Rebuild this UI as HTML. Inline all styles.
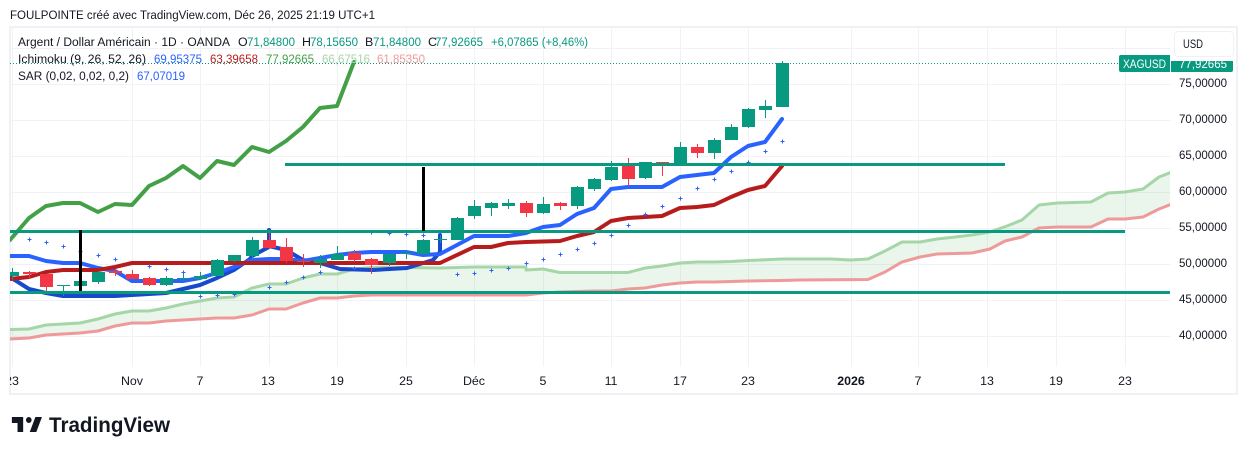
<!DOCTYPE html>
<html><head><meta charset="utf-8"><style>
html,body{margin:0;padding:0;background:#fff;width:1248px;height:455px;overflow:hidden}
svg{display:block;font-family:"Liberation Sans",sans-serif;font-size:12.4px;fill:#131722}
</style></head><body>
<svg width="1248" height="455" viewBox="0 0 1248 455" xmlns="http://www.w3.org/2000/svg">
<defs><clipPath id="c"><rect x="10" y="27" width="1160" height="339"/></clipPath>
<clipPath id="t"><rect x="10" y="366" width="1227" height="28"/></clipPath>
<clipPath id="p"><rect x="1171" y="61" width="62" height="11"/></clipPath></defs>
<rect x="10" y="27" width="1227" height="367" fill="#fff" stroke="#f0f1f4" stroke-width="2"/>
<path d="M12 27V366M132 27V366M200 27V366M269 27V366M337 27V366M406 27V366M474 27V366M543 27V366M611 27V366M680 27V366M748 27V366M851 27V366M918 27V366M987 27V366M1056 27V366M1125 27V366M10 48H1170M10 84H1170M10 120H1170M10 156H1170M10 192H1170M10 228H1170M10 264H1170M10 300H1170M10 336H1170" stroke="#f1f2f5" fill="none" transform="translate(.5 .5)"/>
<g clip-path="url(#c)" fill="none" stroke-linejoin="round" stroke-linecap="round">
<polygon stroke="none" fill="#43a047" fill-opacity=".11" points="10,329.5 29,329 46,325 63,324 80,323 98,319 115,314 132,311 149,311 166,308 183,304 200,301 217,298 234,297 252,288 269,284 286,284 303,278 320,274 337,274 354,269 371,267.5 389,267 406,267.5 440,268 474,267 526,267 526,270 543,269 560,272.5 628,272.5 645,268 662,266 680,263 697,262 714,262 731,261.5 748,260.5 782,259 832,259 850,260 868,259 885,251 902,242 920,242 937,239 955,237 972,235 990,232 1007,226 1022,220 1039,205 1057,203 1091,202 1108,193 1125,192 1143,189 1159,177 1172,172 1172,204 1159,209 1143,217 1125,219 1108,219 1091,227 1057,227 1039,228 1022,237 1005,241 990,249 972,253 937,254 920,257 902,262 885,272 868,279.5 800,280 782,280.5 748,281 714,282 697,282 680,283 662,285 645,288 628,289 611,291 594,291 560,292 543,293 526,295 371,295 354,296 337,298 320,298 303,303 286,309 269,309 252,315 234,318 217,318 200,319 183,320 166,321 149,323 132,323 115,326 98,331 80,333 63,334 46,335 29,338 10,339"/>
<polyline stroke="#a5d6a7" stroke-width="3" points="10,329.5 29,329 46,325 63,324 80,323 98,319 115,314 132,311 149,311 166,308 183,304 200,301 217,298 234,297 252,288 269,284 286,284 303,278 320,274 337,274 354,269 371,267.5 389,267 406,267.5 440,268 474,267 526,267 526,270 543,269 560,272.5 628,272.5 645,268 662,266 680,263 697,262 714,262 731,261.5 748,260.5 782,259 832,259 850,260 868,259 885,251 902,242 920,242 937,239 955,237 972,235 990,232 1007,226 1022,220 1039,205 1057,203 1091,202 1108,193 1125,192 1143,189 1159,177 1172,172"/>
<polyline stroke="#ef9a9a" stroke-width="3" points="10,339 29,338 46,335 63,334 80,333 98,331 115,326 132,323 149,323 166,321 183,320 200,319 217,318 234,318 252,315 269,309 286,309 303,303 320,298 337,298 354,296 371,295 526,295 543,293 560,292 594,291 611,291 628,289 645,288 662,285 680,283 697,282 714,282 748,281 782,280.5 800,280 868,279.5 885,272 902,262 920,257 937,254 972,253 990,249 1005,241 1022,237 1039,228 1057,227 1091,227 1108,219 1125,219 1143,217 1159,209 1172,204"/>
<polyline stroke="#43a047" stroke-width="4" points="10,240 29,218 46,206 63,203 80,203 98,212 115,204 132,205 149,186 166,178 183,166 200,178 217,161 234,165 252,147 269,152 286,141 303,127 320,108 337,106 354,62"/>
<polyline stroke="#1848cc" stroke-width="4" points="10,277 29,289 46,293 63,296 80,296 115,296 132,295 166,293 200,285 217,278 234,270 250,259 252,256 269,247 269,230 269,246 286,250 303,260 320,263 340,269 373,270 407,268 433,260 440,252 440,235"/>
<polyline stroke="#2962ff" stroke-width="4" points="10,256 29,256 46,261 63,263 80,263 98,268 115,271 132,281 149,281 166,281 183,281 200,278 217,273 234,267 252,260 269,259 286,259 303,261 320,258 337,255 354,253 371,252 406,252 423,255 440,254 457,245 474,236 508,236 526,233 543,227 560,225 577,214 594,208 611,189 628,187 662,187 680,177 697,175 714,173 731,157 748,146 765,142 782,119"/>
<polyline stroke="#b71c1c" stroke-width="4" points="10,279 29,277 46,272 63,270 98,270 115,267 132,263 440,263 474,247 491,247 508,243 526,242 560,241 577,236 594,232 611,221 628,218 645,217 662,216 680,208 697,207 714,205 731,197 748,190 765,186 782,166"/>
</g>
<g clip-path="url(#c)">
<path fill="#089981" d="M6 272h13v4h-13zM12 268h1v12h-1zM57 285h13v1h-13zM63 285h1v11h-1zM74 281h13v5h-13zM80 275h1v11h-1zM92 272h13v10h-13zM98 271h1v13h-1zM160 278h13v7h-13zM166 276h1v10h-1zM177 278h13v1h-13zM183 271h1v10h-1zM194 276h13v3h-13zM200 272h1v7h-1zM211 260h13v16h-13zM217 259h1v17h-1zM228 255h13v6h-13zM234 255h1v7h-1zM246 240h13v16h-13zM252 237h1v23h-1zM314 259h13v4h-13zM320 255h1v13h-1zM331 254h13v6h-13zM337 246h1v14h-1zM383 254h13v9h-13zM389 254h1v12h-1zM400 253h13v1h-13zM406 251h1v8h-1zM417 240h13v14h-13zM423 239h1v16h-1zM434 239h13v1h-13zM440 235h1v8h-1zM451 218h13v22h-13zM457 217h1v23h-1zM468 206h13v10h-13zM474 200h1v19h-1zM485 203h13v5h-13zM491 202h1v14h-1zM502 203h13v3h-13zM508 199h1v10h-1zM537 204h13v9h-13zM543 197h1v17h-1zM571 187h13v19h-13zM577 186h1v23h-1zM588 179h13v10h-13zM594 178h1v13h-1zM605 167h13v13h-13zM611 161h1v20h-1zM639 162h13v16h-13zM645 162h1v17h-1zM674 147h13v18h-13zM680 142h1v23h-1zM708 140h13v13h-13zM714 138h1v21h-1zM725 127h13v13h-13zM731 124h1v16h-1zM742 109h13v18h-13zM748 108h1v20h-1zM759 106h13v4h-13zM765 100h1v18h-1zM776 63h13v44h-13zM782 61h1v46h-1z"/>
<path fill="#f23645" d="M23 272h13v2h-13zM29 271h1v8h-1zM40 274h13v13h-13zM46 274h1v17h-1zM109 271h13v2h-13zM115 269h1v7h-1zM126 274h13v5h-13zM132 270h1v9h-1zM143 278h13v7h-13zM149 277h1v9h-1zM263 240h13v8h-13zM269 230h1v19h-1zM280 247h13v14h-13zM286 238h1v25h-1zM297 261h13v1h-13zM303 254h1v13h-1zM348 253h13v7h-13zM354 250h1v12h-1zM365 259h13v6h-13zM371 258h1v16h-1zM520 203h13v10h-13zM526 201h1v16h-1zM554 203h13v3h-13zM560 202h1v8h-1zM622 166h13v13h-13zM628 158h1v28h-1zM656 162h13v4h-13zM662 162h1v14h-1zM691 147h13v6h-13zM697 144h1v14h-1z"/>
<path fill="none" stroke="#2962ff" stroke-width="1" transform="translate(.5 .5)" d="M27 239h4M29 237v4M44 242h4M46 240v4M61 246h4M63 244v4M78 251h4M80 249v4M96 255h4M98 253v4M113 259h4M115 257v4M147 266h4M149 264v4M164 269h4M166 267v4M181 272h4M183 270v4M198 296h4M200 294v4M215 295h4M217 293v4M232 294h4M234 292v4M267 287h4M269 285v4M284 282h4M286 280v4M301 277h4M303 275v4M318 272h4M320 270v4M352 268h4M354 266v4M369 232h4M371 230v4M387 233h4M389 231v4M404 234h4M406 232v4M421 235h4M423 233v4M455 274h4M457 272v4M472 273h4M474 271v4M489 270h4M491 268v4M506 268h4M508 266v4M524 263h4M526 261v4M541 259h4M543 257v4M558 254h4M560 252v4M575 249h4M577 247v4M592 243h4M594 241v4M609 235h4M611 233v4M626 225h4M628 223v4M643 214h4M645 212v4M660 206h4M662 204v4M678 198h4M680 196v4M695 188h4M697 186v4M712 179h4M714 177v4M729 171h4M731 169v4M746 162h4M748 160v4M763 151h4M765 149v4M780 141h4M782 139v4"/>
<path fill="#089981" d="M285 163h720v3h-720zM10 230h1115v3h-1115zM10 291h1160v3h-1160z"/>
<path fill="#000" d="M79 230h3v61h-3zM422 167h3v64h-3z"/>
</g>
<path d="M10 63.500H1119" stroke="#089981" stroke-dasharray="1 2" fill="none"/>
<path d="M1121 55h49v17h-49a2 2 0 0 1-2-2v-13a2 2 0 0 1 2-2z" fill="#089981"/>
<text x="1123" y="68" textLength="43" lengthAdjust="spacingAndGlyphs" style="fill:#fff">XAGUSD</text>
<path d="M1171 61h62v9a2 2 0 0 1-2 2h-60z" fill="#089981"/>
<text x="1179" y="68" textLength="48" lengthAdjust="spacingAndGlyphs" clip-path="url(#p)" style="fill:#fff">77,92665</text>
<rect x="1174.500" y="31.500" width="59" height="25" rx="4" fill="#fff" stroke="#f0f1f4"/>
<text x="1183" y="48" textLength="20" lengthAdjust="spacingAndGlyphs">USD</text>
<text x="1179" y="87" textLength="48" lengthAdjust="spacingAndGlyphs">75,00000</text>
<text x="1179" y="123" textLength="48" lengthAdjust="spacingAndGlyphs">70,00000</text>
<text x="1179" y="159" textLength="48" lengthAdjust="spacingAndGlyphs">65,00000</text>
<text x="1179" y="195" textLength="48" lengthAdjust="spacingAndGlyphs">60,00000</text>
<text x="1179" y="231" textLength="48" lengthAdjust="spacingAndGlyphs">55,00000</text>
<text x="1179" y="267" textLength="48" lengthAdjust="spacingAndGlyphs">50,00000</text>
<text x="1179" y="303" textLength="48" lengthAdjust="spacingAndGlyphs">45,00000</text>
<text x="1179" y="339" textLength="48" lengthAdjust="spacingAndGlyphs">40,00000</text>
<g clip-path="url(#t)" text-anchor="middle">
<text x="12" y="385">23</text><text x="132" y="385">Nov</text><text x="200" y="385">7</text><text x="268" y="385">13</text><text x="337" y="385">19</text><text x="406" y="385">25</text><text x="474" y="385">Déc</text><text x="543" y="385">5</text><text x="611" y="385">11</text><text x="680" y="385">17</text><text x="748" y="385">23</text><text x="851" y="385" font-weight="bold">2026</text><text x="918" y="385">7</text><text x="987" y="385">13</text><text x="1056" y="385">19</text><text x="1125" y="385">23</text>
</g>
<text x="10" y="19" textLength="365" lengthAdjust="spacingAndGlyphs">FOULPOINTE créé avec TradingView.com, Déc 26, 2025 21:19 UTC+1</text>
<text x="18" y="46" textLength="212" lengthAdjust="spacingAndGlyphs">Argent / Dollar Américain · 1D · OANDA</text>
<text x="238" y="46">O</text><text x="247" y="46" textLength="48" lengthAdjust="spacingAndGlyphs" style="fill:#089981">71,84800</text>
<text x="302" y="46">H</text><text x="310" y="46" textLength="48" lengthAdjust="spacingAndGlyphs" style="fill:#089981">78,15650</text>
<text x="365" y="46">B</text><text x="373" y="46" textLength="48" lengthAdjust="spacingAndGlyphs" style="fill:#089981">71,84800</text>
<text x="428" y="46">C</text><text x="435" y="46" textLength="48" lengthAdjust="spacingAndGlyphs" style="fill:#089981">77,92665</text>
<text x="491" y="46" textLength="97" lengthAdjust="spacingAndGlyphs" style="fill:#089981">+6,07865 (+8,46%)</text>
<text x="18" y="63" textLength="128" lengthAdjust="spacingAndGlyphs">Ichimoku (9, 26, 52, 26)</text>
<text x="154" y="63" textLength="48" lengthAdjust="spacingAndGlyphs" style="fill:#2962ff">69,95375</text>
<text x="210" y="63" textLength="48" lengthAdjust="spacingAndGlyphs" style="fill:#b71c1c">63,39658</text>
<text x="266" y="63" textLength="48" lengthAdjust="spacingAndGlyphs" style="fill:#43a047">77,92665</text>
<text x="322" y="63" textLength="48" lengthAdjust="spacingAndGlyphs" style="fill:#a5d6a7">66,67516</text>
<text x="377" y="63" textLength="48" lengthAdjust="spacingAndGlyphs" style="fill:#ef9a9a">61,85350</text>
<text x="18" y="80" textLength="111" lengthAdjust="spacingAndGlyphs">SAR (0,02, 0,02, 0,2)</text>
<text x="137" y="80" textLength="48" lengthAdjust="spacingAndGlyphs" style="fill:#2962ff">67,07019</text>
<path transform="translate(10 411) scale(.94 1)" d="M14 6H2v6h6v9h6V6Zm14 15h-7l6-15h7l-6 15Zm-8-9a3 3 0 1 0 0-6 3 3 0 0 0 0 6Z" fill="#131722"/>
<text x="49" y="432" textLength="121" lengthAdjust="spacingAndGlyphs" style="font-size:21px;font-weight:bold;fill:#131722">TradingView</text>
</svg>
</body></html>
